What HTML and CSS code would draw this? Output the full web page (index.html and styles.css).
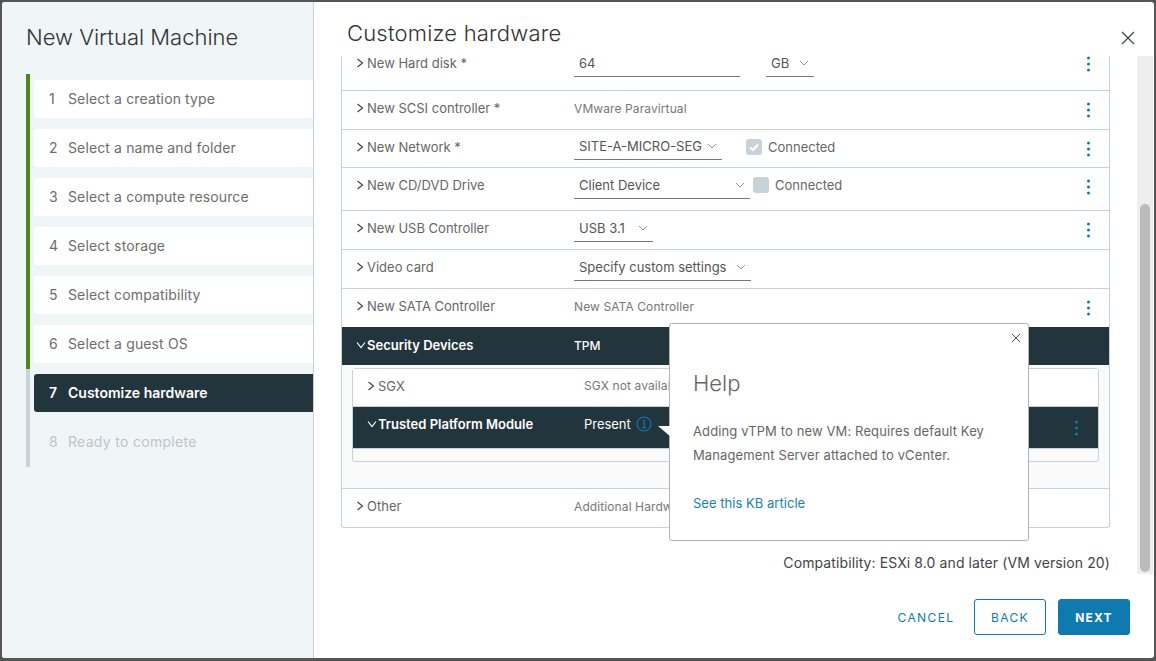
FILE: index.html
```html
<!DOCTYPE html>
<html lang="en">
<head>
    <meta charset="UTF-8">
    <meta name="viewport" content="width=device-width, initial-scale=1.0">
    <title>New Virtual Machine</title>
    <link rel="stylesheet" href="styles.css">
</head>
<body>
    <div class="modal">
        <aside class="sidebar">
            <h2 class="wizard-title">New Virtual Machine</h2>
            <ol class="steps">
                <li class="step done"><div class="step-box"><span class="num">1</span>Select a creation type</div></li>
                <li class="step done"><div class="step-box"><span class="num">2</span>Select a name and folder</div></li>
                <li class="step done"><div class="step-box"><span class="num">3</span>Select a compute resource</div></li>
                <li class="step done"><div class="step-box"><span class="num">4</span>Select storage</div></li>
                <li class="step done"><div class="step-box"><span class="num">5</span>Select compatibility</div></li>
                <li class="step done"><div class="step-box"><span class="num">6</span>Select a guest OS</div></li>
                <li class="step active"><div class="step-box"><span class="num">7</span>Customize hardware</div></li>
                <li class="step disabled"><div class="step-box"><span class="num">8</span>Ready to complete</div></li>
            </ol>
        </aside>

        <main class="content">
            <header class="content-head">
                <h3 class="page-title">Customize hardware</h3>
                <svg class="close-icon" viewBox="0 0 14 14" width="14" height="14"><path d="M1 1L13 13M13 1L1 13" stroke="#3d4a52" stroke-width="1.3" fill="none"/></svg>
            </header>

            <div class="scroll-zone">
                <div class="scroll-body">
                    <div class="hw-table">
                        <div class="row row-first">
                            <svg class="chev" viewBox="0 0 8 10"><path d="M1.5 1L6.5 5L1.5 9" /></svg>
                            <span class="label">New Hard disk *</span>
                            <div class="value">
                                <span class="field field-disk">64</span>
                                <span class="field field-unit">GB <svg class="caret" viewBox="0 0 10 6"><path d="M1 1L5 5L9 1" /></svg></span>
                            </div>
                            <span class="dots"><i></i><i></i><i></i></span>
                        </div>
                        <div class="row">
                            <svg class="chev" viewBox="0 0 8 10"><path d="M1.5 1L6.5 5L1.5 9" /></svg>
                            <span class="label">New SCSI controller *</span>
                            <div class="value small">VMware Paravirtual</div>
                            <span class="dots"><i></i><i></i><i></i></span>
                        </div>
                        <div class="row row-net">
                            <svg class="chev" viewBox="0 0 8 10"><path d="M1.5 1L6.5 5L1.5 9" /></svg>
                            <span class="label">New Network *</span>
                            <div class="value">
                                <span class="field field-net">SITE-A-MICRO-SEG <svg class="caret" viewBox="0 0 10 6"><path d="M1 1L5 5L9 1" /></svg></span>
                                <span class="check checked"><svg viewBox="0 0 16 16" width="16" height="16"><path d="M4 8.5L7 11L12 5.5" stroke="#fff" stroke-width="2" fill="none"/></svg></span>
                                <span class="check-label">Connected</span>
                            </div>
                            <span class="dots"><i></i><i></i><i></i></span>
                        </div>
                        <div class="row row-cd">
                            <svg class="chev" viewBox="0 0 8 10"><path d="M1.5 1L6.5 5L1.5 9" /></svg>
                            <span class="label">New CD/DVD Drive</span>
                            <div class="value">
                                <span class="field field-cd">Client Device <svg class="caret" viewBox="0 0 10 6"><path d="M1 1L5 5L9 1" /></svg></span>
                                <span class="check"></span>
                                <span class="check-label">Connected</span>
                            </div>
                            <span class="dots"><i></i><i></i><i></i></span>
                        </div>
                        <div class="row">
                            <svg class="chev" viewBox="0 0 8 10"><path d="M1.5 1L6.5 5L1.5 9" /></svg>
                            <span class="label">New USB Controller</span>
                            <div class="value">
                                <span class="field field-usb">USB 3.1 <svg class="caret" viewBox="0 0 10 6"><path d="M1 1L5 5L9 1" /></svg></span>
                            </div>
                            <span class="dots"><i></i><i></i><i></i></span>
                        </div>
                        <div class="row">
                            <svg class="chev" viewBox="0 0 8 10"><path d="M1.5 1L6.5 5L1.5 9" /></svg>
                            <span class="label">Video card</span>
                            <div class="value">
                                <span class="field field-video">Specify custom settings <svg class="caret" viewBox="0 0 10 6"><path d="M1 1L5 5L9 1" /></svg></span>
                            </div>
                        </div>
                        <div class="row">
                            <svg class="chev" viewBox="0 0 8 10"><path d="M1.5 1L6.5 5L1.5 9" /></svg>
                            <span class="label">New SATA Controller</span>
                            <div class="value small">New SATA Controller</div>
                            <span class="dots"><i></i><i></i><i></i></span>
                        </div>
                        <div class="row row-dark row-security">
                            <svg class="chev chev-open" viewBox="0 0 10 8"><path d="M1 1.5L5 6.5L9 1.5" /></svg>
                            <span class="label">Security Devices</span>
                            <div class="value">TPM</div>
                        </div>
                        <div class="expand">
                            <div class="nested">
                                <div class="row nested-row">
                                    <svg class="chev" viewBox="0 0 8 10"><path d="M1.5 1L6.5 5L1.5 9" /></svg>
                                    <span class="label">SGX</span>
                                    <div class="value small">SGX not available</div>
                                </div>
                                <div class="row row-dark nested-row row-tpm">
                                    <svg class="chev chev-open" viewBox="0 0 10 8"><path d="M1 1.5L5 6.5L9 1.5" /></svg>
                                    <span class="label">Trusted Platform Module</span>
                                    <div class="value">Present
                                        <svg class="info" viewBox="0 0 16 16" width="16" height="16"><circle cx="8" cy="8" r="7" stroke="#0f7ab0" stroke-width="1.2" fill="none"/><path d="M6.5 7H8.3V11.5M6.3 11.8H10" stroke="#0f7ab0" stroke-width="1.2" fill="none"/><circle cx="8" cy="4.6" r="1" fill="#0f7ab0"/></svg>
                                    </div>
                                    <span class="dots"><i></i><i></i><i></i></span>
                                </div>
                            </div>
                        </div>
                        <div class="row row-last">
                            <svg class="chev" viewBox="0 0 8 10"><path d="M1.5 1L6.5 5L1.5 9" /></svg>
                            <span class="label">Other</span>
                            <div class="value small">Additional Hardware</div>
                        </div>
                    </div>
                    <p class="compat">Compatibility: ESXi 8.0 and later (VM version 20)</p>
                </div>
                <div class="scrollbar"><div class="thumb"></div></div>
            </div>

            <footer class="actions">
                <button class="btn btn-link">CANCEL</button>
                <button class="btn btn-outline">BACK</button>
                <button class="btn btn-primary">NEXT</button>
            </footer>

            <div class="popover">
                <span class="pop-arrow"></span>
                <svg class="pop-close" viewBox="0 0 10 10" width="10" height="10"><path d="M1 1L9 9M9 1L1 9" stroke="#4a4a4a" stroke-width="1" fill="none"/></svg>
                <h3 class="pop-title">Help</h3>
                <p class="pop-text">Adding vTPM to new VM: Requires default Key Management Server attached to vCenter.</p>
                <a class="pop-link" href="#">See this KB article</a>
            </div>
        </main>
    </div>
</body>
</html>
```

FILE: styles.css
```css
* {
    box-sizing: border-box;
}

html, body {
    height: 100%;
}

body {
    margin: 0;
    padding: 2px;
    background-color: #555;
    font-family: Inter, "Open Sans", sans-serif;
    font-size: 13px;
    color: #666;
    overflow: hidden;
}

.modal {
    display: flex;
    width: 1152px;
    height: 656px;
    background-color: #fff;
    border-radius: 3px;
    overflow: hidden;
}

/* left wizard column */
.sidebar {
    width: 312px;
    flex: none;
    padding: 22px 0 0 24px;
    background-color: #f0f5f8;
    border-right: 1px solid #c9d2d8;
}

.wizard-title {
    margin: 0;
    font-size: 22px;
    font-weight: 300;
    line-height: 26px;
    color: #333;
}

.steps {
    list-style: none;
    margin: 24px 0 0;
    padding: 0;
}

.step {
    border-left: 4px solid #4a8a1a;
    padding: 5.5px 0 5.5px 4px;
    height: 49px;
}

.step:first-child {
    padding-top: 6px;
    height: 49.5px;
}

.step.active,
.step.disabled {
    border-left-color: #c9d2d8;
}

.step-box {
    display: flex;
    align-items: center;
    height: 38px;
    padding: 0 0 2px 15px;
    background-color: #fff;
    border-radius: 3px 0 0 3px;
    font-size: 14px;
    letter-spacing: .13px;
    color: #6d6d6d;
}

.num {
    width: 19px;
}

.step.active .step-box {
    background-color: #22343c;
    color: #fff;
    font-weight: 600;
    letter-spacing: 0;
}

.step.disabled .step-box {
    padding-bottom: 1px;
    background-color: transparent;
    color: #bfc4c7;
    letter-spacing: .3px;
}

/* right side */
.content {
    position: relative;
    flex: 1;
    display: flex;
    flex-direction: column;
    min-width: 0;
}

.content-head {
    display: flex;
    justify-content: space-between;
    height: 54px;
    padding: 17px 19px 0 33px;
}

.page-title {
    margin: 0;
    font-size: 22px;
    font-weight: 300;
    line-height: 28px;
    letter-spacing: .2px;
    color: #333;
}

.close-icon {
    margin-top: 12px;
}

.scroll-zone {
    display: flex;
    height: 518px;
}

.scroll-body {
    width: 823px;
    padding: 0 27px;
    overflow: hidden;
}

.scrollbar {
    width: 16px;
    flex: none;
    background-color: #eee;
    padding: 148px 3px 2px;
}

.thumb {
    height: 100%;
    background-color: #bbb;
    border-radius: 5px;
}

/* first row is scrolled partly out of view */
.hw-table {
    width: 769px;
    margin-top: -20px;
    border-left: 1px solid #c9d2d8;
    border-right: 1px solid #c9d2d8;
    border-bottom: 1px solid #c9d2d8;
    border-radius: 0 0 3px 3px;
}

.row {
    display: flex;
    align-items: center;
    height: 39px;
    padding: 0 0 4px 14px;
    border-bottom: 1px solid #c9d2d8;
    font-size: 13px;
    position: relative;
}

.row-first {
    height: 55px;
    padding-bottom: 0;
    line-height: 14px;
}

.row-first .dots {
    top: 52%;
}

.row-net {
    height: 38px;
}

.row-cd {
    height: 43px;
    padding-bottom: 8px;
}

.row-cd .dots {
    top: 45%;
}

.row-last {
    height: 38px;
    border-bottom: 0;
}

.chev {
    width: 8px;
    height: 10px;
    flex: none;
    margin-right: 3px;
    fill: none;
    stroke: #444;
    stroke-width: 1.2;
}

.chev-open {
    width: 10px;
    height: 8px;
    margin-right: 1px;
    stroke: #fff;
}

.label {
    width: 207px;
    flex: none;
    color: #666;
}

.value {
    display: flex;
    align-items: center;
    color: #666;
}

.small {
    font-size: 12px;
    letter-spacing: .1px;
    color: #777;
}

.field {
    display: flex;
    align-items: center;
    justify-content: space-between;
    height: 27px;
    padding: 0 5px;
    border-bottom: 1px solid #6d7a82;
    color: #555;
}

.field-disk {
    width: 166px;
}

.field-unit {
    width: 48px;
    margin-left: 26px;
}

.field-net {
    width: 148px;
}

.field-cd {
    width: 176px;
}

.field-usb {
    width: 79px;
}

.field-video {
    width: 177px;
}

.caret {
    width: 10px;
    height: 6px;
    fill: none;
    stroke: #8a949a;
    stroke-width: 1;
}

.check {
    display: inline-flex;
    width: 16px;
    height: 16px;
    margin-left: 3px;
    background-color: #c9d2d8;
    border-radius: 3px;
}

.checked {
    margin-left: 24px;
}

.check-label {
    margin-left: 6px;
}

.dots {
    position: absolute;
    right: 19px;
    top: 50%;
    transform: translateY(-50%);
    display: flex;
    flex-direction: column;
    gap: 3px;
}

.dots i {
    display: block;
    width: 3px;
    height: 3px;
    border-radius: 50%;
    background-color: #0f7ab0;
}

.row-dark {
    background-color: #22343c;
    border-bottom: 0;
}

.row-dark .label,
.row-dark .value {
    color: #fff;
    font-weight: 600;
}

.row-dark .value {
    font-size: 12px;
    font-weight: 500;
}

.row-security {
    height: 38px;
    margin-top: -1px;
    padding-bottom: 2px;
}

.expand {
    height: 124px;
    padding: 3px 10px 0;
    background-color: #fafafa;
    border-bottom: 1px solid #c9d2d8;
}

.nested {
    height: 94px;
    border: 1px solid #c9d2d8;
    border-radius: 3px;
}

.nested-row {
    height: 38px;
    background-color: #fff;
    padding-left: 14px;
}

.nested-row .label {
    width: 206px;
}

.nested-row.row-tpm {
    height: 42px;
    padding-bottom: 7px;
    background-color: #22343c;
    border-bottom: 1px solid #c9d2d8;
}

.row-tpm .value {
    font-size: 13px;
    font-weight: 400;
    letter-spacing: -.05px;
}

.info {
    margin-left: 5px;
}

.row-tpm .dots {
    right: 20px;
}

.compat {
    margin: 26px 0 0;
    text-align: right;
    font-size: 14px;
    letter-spacing: .1px;
    color: #444;
}

.actions {
    display: flex;
    align-items: center;
    justify-content: flex-end;
    gap: 12px;
    padding: 25px 24px 0 0;
}

.btn {
    height: 36px;
    padding: 0;
    border-radius: 3px;
    font-family: inherit;
    font-size: 12px;
    letter-spacing: 1.4px;
    font-weight: 400;
    color: #0f7ab0;
    background: none;
    border: 1px solid #0f7ab0;
}

.btn-link {
    width: 72px;
    border: 0;
}

.btn-outline {
    width: 72px;
}

.btn-primary {
    width: 72px;
    background-color: #0f7ab0;
    color: #fff;
    font-weight: 700;
    letter-spacing: 1.2px;
}

/* help popover sits over the table */
.popover {
    position: absolute;
    left: 355px;
    top: 321px;
    width: 360px;
    height: 218px;
    padding: 46px 23px 0;
    background-color: #fff;
    border: 1px solid #b3b3b3;
    border-radius: 3px;
}

.pop-arrow {
    position: absolute;
    left: -12px;
    top: 102px;
    width: 13px;
    height: 11px;
    background-color: #fff;
    clip-path: polygon(0 0, 100% 0, 100% 100%);
}

.pop-close {
    position: absolute;
    right: 7px;
    top: 9px;
}

.pop-title {
    margin: 0;
    font-size: 22px;
    font-weight: 300;
    line-height: 26px;
    color: #666;
}

.pop-text {
    margin: 23px 0 0;
    font-size: 13px;
    line-height: 24px;
    letter-spacing: .12px;
    color: #666;
}

.pop-link {
    display: block;
    margin-top: 28px;
    font-size: 13px;
    letter-spacing: .03px;
    color: #1a7fb3;
    text-decoration: none;
}
```
